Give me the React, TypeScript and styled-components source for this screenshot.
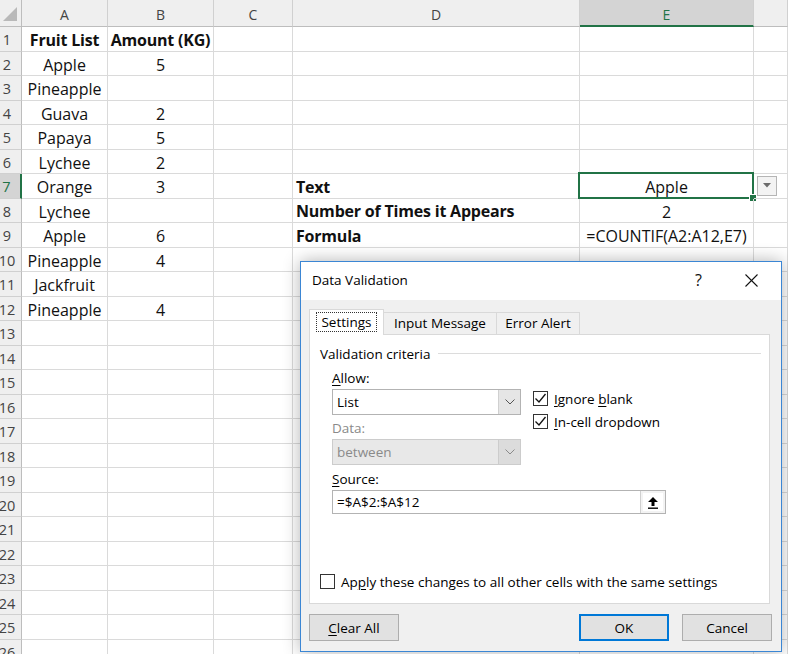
import React from 'react';
import styled, { createGlobalStyle, css } from 'styled-components';

const GlobalStyle = createGlobalStyle`
  html, body { margin: 0; padding: 0; background: #fff; overflow: hidden; }
  body { font-family: "Open Sans", "Liberation Sans", sans-serif; }
  * { box-sizing: border-box; }
`;

const GREEN = '#217346';

const Page = styled.div`
  position: relative;
  width: 788px;
  height: 654px;
  overflow: hidden;
`;

const Sheet = styled.div`
  display: grid;
  grid-template-columns: 22px 86px 106px 79px 287px 174px 34px;
  grid-template-rows: 27px;
  grid-auto-rows: 24.5px;
  font-family: "Open Sans", "Liberation Sans", sans-serif;
`;

const Corner = styled.div`
  background: #efefef;
  border-right: 1px solid #bdbdbd;
  border-bottom: 1px solid #bdbdbd;
  display: flex;
  align-items: flex-end;
  justify-content: flex-end;
  padding: 0 4px 5px 0;
`;

const ColHeader = styled.div<{ $active?: boolean }>`
  background: ${(p) => (p.$active ? '#d4d4d4' : '#efefef')};
  color: ${(p) => (p.$active ? GREEN : '#444')};
  border-right: 1px solid #d0d0d0;
  border-bottom: ${(p) => (p.$active ? `2px solid ${GREEN}` : '1px solid #bdbdbd')};
  display: flex;
  align-items: center;
  justify-content: center;
  padding-top: 3px;
  font-size: 14px;
`;

const RowHeader = styled.div<{ $active?: boolean }>`
  background: ${(p) => (p.$active ? '#d4d4d4' : '#efefef')};
  color: ${(p) => (p.$active ? GREEN : '#444')};
  border-right: ${(p) => (p.$active ? `2px solid ${GREEN}` : '1px solid #bdbdbd')};
  border-bottom: 1px solid #d0d0d0;
  display: flex;
  align-items: center;
  justify-content: center;
  padding: 2px 7px 0 0;
  font-size: 14.5px;
  overflow: hidden;
  white-space: nowrap;
`;

const Cell = styled.div<{ $align?: 'left' | 'center'; $bold?: boolean }>`
  position: relative;
  border-right: 1px solid #dadada;
  border-bottom: 1px solid #dadada;
  display: flex;
  align-items: center;
  justify-content: ${(p) => (p.$align === 'left' ? 'flex-start' : 'center')};
  padding: ${(p) => (p.$bold ? '2px' : '3px')} 3px 0;
  font-size: 16px;
  font-weight: ${(p) => (p.$bold ? 700 : 400)};
  letter-spacing: ${(p) => (p.$bold ? '-0.2px' : '0')};
  color: #111;
  white-space: nowrap;
`;

const SelectionFrame = styled.div`
  position: absolute;
  left: -2px;
  top: -2px;
  right: -1px;
  bottom: -1px;
  border: 2px solid ${GREEN};
  pointer-events: none;
`;

const FillHandle = styled.div`
  position: absolute;
  right: -4px;
  bottom: -4px;
  width: 6px;
  height: 6px;
  background: ${GREEN};
  outline: 1px solid #fff;
`;

const CellDrop = styled.div`
  width: 20px;
  height: 20px;
  margin-top: -3px;
  background: #f3f3f3;
  border: 1px solid #b5b5b5;
  display: flex;
  align-items: center;
  justify-content: center;
`;

/* ---------- dialog ---------- */

const Dialog = styled.div`
  position: absolute;
  left: 300px;
  top: 261px;
  width: 482px;
  height: 391px;
  border: 1px solid #3b86d4;
  background: #f0f0f0;
  box-shadow: 0 0 16px rgba(0, 0, 0, 0.3);
  display: flex;
  flex-direction: column;
  font-family: "Open Sans", "Noto Sans", sans-serif;
  font-size: 13.5px;
  color: #000;
`;

const TitleBar = styled.div`
  height: 38px;
  flex-shrink: 0;
  background: #fff;
  display: flex;
  align-items: center;
  padding: 0 0 2px 11px;
`;

const Title = styled.div`
  flex: 1;
  font-size: 13.5px;
`;

const TitleButtons = styled.div`
  display: flex;
  align-items: center;
  gap: 43px;
  padding-right: 23px;
`;

const Help = styled.span`
  font-size: 16px;
  color: #111;
`;

const Body = styled.div`
  flex: 1;
  display: flex;
  flex-direction: column;
  padding: 9px 11px 10px 8px;
`;

const TabStrip = styled.div`
  display: flex;
  align-items: flex-end;
  height: 26px;
  position: relative;
  z-index: 1;
  margin-bottom: -1px;
`;

const Tab = styled.div<{ $active?: boolean; $w: number }>`
  width: ${(p) => p.$w}px;
  height: ${(p) => (p.$active ? 26 : 23)}px;
  background: ${(p) => (p.$active ? '#fff' : '#f0f0f0')};
  border: 1px solid #d9d9d9;
  border-bottom: ${(p) => (p.$active ? 'none' : '1px solid #d9d9d9')};
  ${(p) =>
    !p.$active &&
    css`
      border-left: none;
    `}
  display: flex;
  align-items: center;
  justify-content: center;
  padding-bottom: 1px;
  font-size: 13.5px;
`;

const FocusLabel = styled.span`
  border: 1px dotted #333;
  padding: 0 4px;
  line-height: 18px;
`;

const Panel = styled.div`
  height: 270px;
  background: #fff;
  border: 1px solid #d9d9d9;
  display: flex;
  flex-direction: column;
  padding: 11px 8px 14px 10px;
`;

const GroupHeader = styled.div`
  display: flex;
  align-items: center;
  gap: 8px;
  height: 16px;
  font-size: 13.5px;
`;

const GroupLine = styled.div`
  flex: 1;
  height: 1px;
  margin-top: -2px;
  background: #dcdcdc;
`;

const Criteria = styled.div`
  display: flex;
  flex-direction: column;
  padding-left: 12px;
  margin-top: 8px;
`;

const TopRow = styled.div`
  display: flex;
  gap: 12px;
`;

const LeftCol = styled.div`
  display: flex;
  flex-direction: column;
  width: 189px;
`;

const RightCol = styled.div`
  display: flex;
  flex-direction: column;
  gap: 8px;
  padding-top: 21px;
`;

const FieldLabel = styled.div<{ $disabled?: boolean; $gapTop?: number }>`
  height: 16px;
  line-height: 16px;
  margin-top: ${(p) => p.$gapTop ?? 0}px;
  margin-bottom: 3px;
  font-size: 13.5px;
  color: ${(p) => (p.$disabled ? '#8a8a8a' : '#000')};
`;

const Select = styled.div<{ $disabled?: boolean }>`
  height: 26px;
  display: flex;
  border: 1px solid ${(p) => (p.$disabled ? '#cccccc' : '#b3b3b3')};
  background: ${(p) => (p.$disabled ? '#e8e8e8' : '#fff')};
  color: ${(p) => (p.$disabled ? '#8a8a8a' : '#000')};
`;

const SelectValue = styled.div`
  flex: 1;
  display: flex;
  align-items: center;
  padding-left: 4px;
  font-size: 13.5px;
`;

const SelectArrow = styled.div<{ $disabled?: boolean }>`
  width: 22px;
  background: ${(p) => (p.$disabled ? '#dcdcdc' : '#e6e6e6')};
  border-left: 1px solid ${(p) => (p.$disabled ? '#cccccc' : '#d0d0d0')};
  display: flex;
  align-items: center;
  justify-content: center;
`;

const CheckRow = styled.label`
  display: flex;
  align-items: center;
  gap: 6px;
  font-size: 13.5px;
  height: 15px;
`;

const Box = styled.span`
  width: 15px;
  height: 15px;
  flex-shrink: 0;
  border: 1px solid #333;
  background: #fff;
  display: flex;
  align-items: center;
  justify-content: center;
`;

const Key = styled.span`
  text-decoration: underline;
  text-underline-offset: 2px;
`;

const SourceInput = styled.div`
  width: 334px;
  height: 24px;
  display: flex;
  border: 1px solid #b3b3b3;
  background: #fff;
`;

const SourceValue = styled.div`
  flex: 1;
  display: flex;
  align-items: center;
  padding-left: 4px;
  font-size: 13.5px;
`;

const CollapseButton = styled.div`
  width: 25px;
  border-left: 1px solid #cfcfcf;
  background: #fff;
  display: flex;
  align-items: center;
  justify-content: center;
  box-shadow: inset 0 0 0 2px #f3f3f3;
`;

const ApplyRow = styled.div`
  margin-top: auto;
`;

const ButtonRow = styled.div`
  display: flex;
  justify-content: space-between;
  align-items: center;
  margin-top: 10px;
  margin-right: -2px;
`;

const ButtonGroup = styled.div`
  display: flex;
  gap: 13px;
`;

const Button = styled.div<{ $default?: boolean }>`
  width: 90px;
  height: 27px;
  background: #e1e1e1;
  border: ${(p) => (p.$default ? '2px solid #0078d7' : '1px solid #adadad')};
  display: flex;
  align-items: center;
  justify-content: center;
  font-size: 13.5px;
`;

const Chevron = ({ color = '#555' }: { color?: string }) => (
  <svg width="10" height="6" viewBox="0 0 10 6">
    <polyline points="0.5,0.5 5,5 9.5,0.5" fill="none" stroke={color} strokeWidth="1" />
  </svg>
);

const Check = () => (
  <svg width="13" height="13" viewBox="0 0 13 13">
    <polyline points="1.5,6.5 5,10 11.5,2" fill="none" stroke="#111" strokeWidth="1.3" />
  </svg>
);

const Checkbox = ({ checked, children }: { checked?: boolean; children: React.ReactNode }) => (
  <CheckRow>
    <Box>{checked && <Check />}</Box>
    <span>{children}</span>
  </CheckRow>
);

type Row = { a?: string; b?: string; d?: string; e?: string };

const rows: Row[] = [
  { a: 'Fruit List', b: 'Amount (KG)' },
  { a: 'Apple', b: '5' },
  { a: 'Pineapple' },
  { a: 'Guava', b: '2' },
  { a: 'Papaya', b: '5' },
  { a: 'Lychee', b: '2' },
  { a: 'Orange', b: '3', d: 'Text', e: 'Apple' },
  { a: 'Lychee', d: 'Number of Times it Appears', e: '2' },
  { a: 'Apple', b: '6', d: 'Formula', e: '=COUNTIF(A2:A12,E7)' },
  { a: 'Pineapple', b: '4' },
  { a: 'Jackfruit' },
  { a: 'Pineapple', b: '4' },
];

const TOTAL_ROWS = 26;

export default function App() {
  const cols = ['A', 'B', 'C', 'D', 'E', ''];
  return (
    <Page>
      <GlobalStyle />
      <Sheet>
        <Corner>
          <svg width="14" height="14" viewBox="0 0 14 14">
            <polygon points="14,0 14,14 0,14" fill="#b9b9b9" />
          </svg>
        </Corner>
        {cols.map((c, i) => (
          <ColHeader key={i} $active={c === 'E'}>
            {c}
          </ColHeader>
        ))}
        {Array.from({ length: TOTAL_ROWS }).map((_, r) => {
          const row = rows[r] || {};
          const n = r + 1;
          const sel = n === 7;
          return (
            <React.Fragment key={r}>
              <RowHeader $active={sel}>{n}</RowHeader>
              <Cell $bold={n === 1}>{row.a}</Cell>
              <Cell $bold={n === 1}>{row.b}</Cell>
              <Cell />
              <Cell $align="left" $bold>
                {row.d}
              </Cell>
              <Cell>
                {row.e}
                {sel && (
                  <SelectionFrame>
                    <FillHandle />
                  </SelectionFrame>
                )}
              </Cell>
              <Cell $align="left">
                {sel && (
                  <CellDrop>
                    <svg width="8" height="5" viewBox="0 0 8 5">
                      <polygon points="0,0 8,0 4,4.5" fill="#6b6b6b" />
                    </svg>
                  </CellDrop>
                )}
              </Cell>
            </React.Fragment>
          );
        })}
      </Sheet>

      <Dialog>
        <TitleBar>
          <Title>Data Validation</Title>
          <TitleButtons>
            <Help>?</Help>
            <svg width="13" height="13" viewBox="0 0 13 13">
              <line x1="0.5" y1="0.5" x2="12.5" y2="12.5" stroke="#111" strokeWidth="1.1" />
              <line x1="12.5" y1="0.5" x2="0.5" y2="12.5" stroke="#111" strokeWidth="1.1" />
            </svg>
          </TitleButtons>
        </TitleBar>
        <Body>
          <TabStrip>
            <Tab $active $w={75}>
              <FocusLabel>Settings</FocusLabel>
            </Tab>
            <Tab $w={113}>Input Message</Tab>
            <Tab $w={83}>Error Alert</Tab>
          </TabStrip>
          <Panel>
            <GroupHeader>
              <span>Validation criteria</span>
              <GroupLine />
            </GroupHeader>
            <Criteria>
              <TopRow>
                <LeftCol>
                  <FieldLabel>
                    <Key>A</Key>llow:
                  </FieldLabel>
                  <Select>
                    <SelectValue>List</SelectValue>
                    <SelectArrow>
                      <Chevron />
                    </SelectArrow>
                  </Select>
                  <FieldLabel $disabled $gapTop={5}>
                    Data:
                  </FieldLabel>
                  <Select $disabled>
                    <SelectValue>between</SelectValue>
                    <SelectArrow $disabled>
                      <Chevron color="#8a8a8a" />
                    </SelectArrow>
                  </Select>
                </LeftCol>
                <RightCol>
                  <Checkbox checked>
                    <Key>I</Key>gnore <Key>b</Key>lank
                  </Checkbox>
                  <Checkbox checked>
                    <Key>I</Key>n-cell dropdown
                  </Checkbox>
                </RightCol>
              </TopRow>
              <FieldLabel $gapTop={6}>
                <Key>S</Key>ource:
              </FieldLabel>
              <SourceInput>
                <SourceValue>=$A$2:$A$12</SourceValue>
                <CollapseButton>
                  <svg width="12" height="13" viewBox="0 0 12 13">
                    <polygon points="6,1 11,6 7.5,6 7.5,10 4.5,10 4.5,6 1,6" fill="#000" />
                    <rect x="1" y="11.5" width="10" height="1.4" fill="#000" />
                  </svg>
                </CollapseButton>
              </SourceInput>
            </Criteria>
            <ApplyRow>
              <Checkbox>
                Ap<Key>p</Key>ly these changes to all other cells with the same settings
              </Checkbox>
            </ApplyRow>
          </Panel>
          <ButtonRow>
            <Button>
              <span>
                <Key>C</Key>lear All
              </span>
            </Button>
            <ButtonGroup>
              <Button $default>OK</Button>
              <Button>Cancel</Button>
            </ButtonGroup>
          </ButtonRow>
        </Body>
      </Dialog>
    </Page>
  );
}
